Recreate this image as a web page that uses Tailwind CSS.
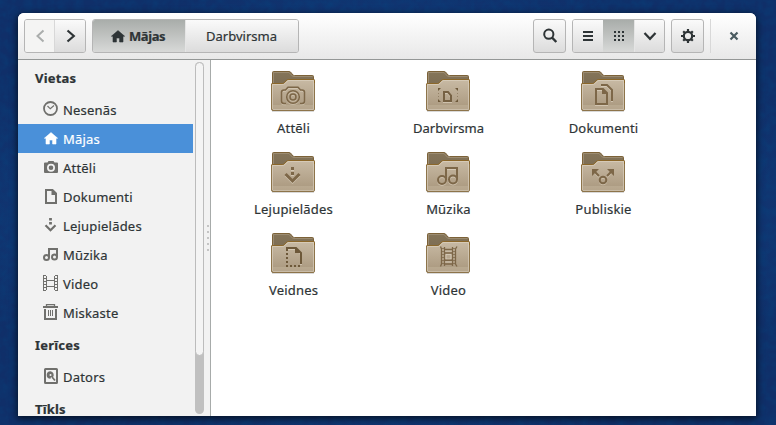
<!DOCTYPE html>
<html lang="lv">
<head>
<meta charset="utf-8">
<title>Mājas</title>
<script src="https://cdn.jsdelivr.net/npm/@tailwindcss/browser@4"></script>
</head>
<body class="relative h-[425px] w-[776px] overflow-hidden bg-[#103470] bg-[radial-gradient(ellipse_at_50%_50%,#12458b_0%,#134488_35%,#102f69_80%)] font-['Noto_Sans','Open_Sans',sans-serif] text-[13px] text-[#2e3436] [-webkit-text-stroke:0.2px_currentColor]">

<!-- wallpaper grain -->
<svg class="absolute inset-0 opacity-25" width="776" height="425">
  <filter id="grain"><feTurbulence type="fractalNoise" baseFrequency="0.12" numOctaves="3" seed="4"/><feColorMatrix values="0 0 0 0 0  0 0 0 0 0.08  0 0 0 0 0.25  1.8 0 0 0 -0.55"/></filter>
  <rect width="776" height="425" filter="url(#grain)"/>
</svg>

<!-- shared symbols -->
<svg width="0" height="0" class="absolute">
  <defs>
    <linearGradient id="front" x1="0" y1="0" x2="0" y2="1"><stop offset="0" stop-color="#c8baa4"/><stop offset="1" stop-color="#a8967c"/></linearGradient>
    <linearGradient id="back" x1="0" y1="0" x2="0" y2="1"><stop offset="0" stop-color="#857559"/><stop offset="1" stop-color="#7d6d53"/></linearGradient>
    <linearGradient id="shade" x1="0" y1="0" x2="0" y2="1"><stop offset="0" stop-color="#000" stop-opacity=".4"/><stop offset="1" stop-color="#000" stop-opacity="0"/></linearGradient>
    <symbol id="folder" viewBox="0 0 44 42">
      <rect x="1" y="39" width="42" height="2.4" rx="1" fill="url(#shade)"/>
      <path d="M1.500 14V1.500Q1.500.5 2.500.5H18Q19 .5 19.500 1L22 4Q22.500 4.500 23.500 4.500H41.500Q42.500 4.500 42.500 5.500V14Z" fill="url(#back)" stroke="#7c6238"/>
      <path d="M2.500 12V1.500H18L21.500 5.200Q22 5.500 23 5.500H41.500" fill="none" stroke="#a5967c" stroke-opacity=".7"/>
      <path d="M.5 38V13.5Q.5 12.5 1.5 12.5H11.5Q12.5 12.5 13.3 11.7L15.5 9.3Q16.2 8.5 17.3 8.5H42.5Q43.5 8.5 43.5 9.5V38Q43.5 39.5 42 39.5H2Q.5 39.5 .5 38Z" fill="url(#front)" stroke="#8d744a"/>
      <path d="M.5 14V13.5Q.5 12.5 1.5 12.5H11.5Q12.5 12.5 13.3 11.7L15.5 9.3Q16.2 8.5 17.3 8.5H42.5Q43.5 8.5 43.5 9.5V12" fill="none" stroke="#8b672a"/>
      <path d="M1.5 38V13.5H12Q13 13.5 13.8 12.7L16.2 10.2Q17 9.5 18 9.5H42.5V38.5H2" fill="none" stroke="#e0d6c5" stroke-opacity=".6"/>
      <path d="M2 34H42V38H2Z" fill="#d4c7b1" opacity=".3"/>
    </symbol>
    <symbol id="home" viewBox="0 0 16 16"><path d="M8 2.600 14.600 8.200H13V14H9.600V10H6.400V14H3V8.200H1.400Z" fill="currentColor" stroke="currentColor" stroke-width=".6" stroke-linejoin="round"/></symbol>
  </defs>
</svg>

<div class="relative ml-[18px] mt-[13px] flex h-[403px] w-[738px] flex-col overflow-hidden rounded-t-[6px] bg-white shadow-[0_2px_7px_1px_rgba(0,0,0,0.65)]">

  <header class="flex h-[47px] shrink-0 items-start border-b border-[#949796] bg-linear-to-b from-white to-[#e8e8e8] px-[6px] pt-[6px]">
    <div class="flex h-[34px] w-[62px] overflow-hidden rounded-[3px] border border-[#b5b5b5]">
      <div class="flex w-[30px] items-center justify-center border-r border-[#d8d8d8] bg-[#f4f4f3] text-[#aaadac]"><svg width="16" height="16" fill="none" stroke="currentColor" stroke-width="2"><path d="M11.500 2.500 5.500 8 11.500 13.500"/></svg></div>
      <div class="flex flex-1 items-center justify-center bg-linear-to-b from-[#fafafa] to-[#dcdcdc]"><svg width="16" height="16" fill="none" stroke="currentColor" stroke-width="2.200"><path d="M5.500 2.500 11.800 8 5.500 13.500"/></svg></div>
    </div>
    <div class="ml-[6px] flex h-[34px] w-[207px] overflow-hidden rounded-[3px] border border-[#b5b5b5]">
      <div class="flex w-[93px] items-center border-r border-[#e5e5e5] bg-linear-to-b from-[#a9adaa] to-[#d8d9d8] pl-[17px] font-bold"><svg class="mr-[3px] h-[16px] w-[16px]"><use href="#home"/></svg><span class="pt-px tracking-[-0.4px]">Mājas</span></div>
      <div class="flex flex-1 items-center justify-center bg-linear-to-b from-[#fafafa] to-[#dcdcdc] pr-px pt-px">Darbvirsma</div>
    </div>
    <div class="ml-auto flex h-[34px] w-[33px] items-center justify-center rounded-[3px] border border-[#b5b5b5] bg-linear-to-b from-[#fafafa] to-[#dcdcdc]"><svg width="16" height="16" fill="none" stroke="currentColor" stroke-width="2"><circle cx="6.800" cy="6.200" r="4.600"/><path d="M10 9.500 14.300 14" stroke-width="2.500"/></svg></div>
    <div class="ml-[6px] flex h-[34px] w-[93px] overflow-hidden rounded-[3px] border border-[#b5b5b5]">
      <div class="flex w-[30px] items-center justify-center bg-linear-to-b from-[#fafafa] to-[#dcdcdc]"><svg width="16" height="16" fill="currentColor"><path d="M3 3h10v2H3zM3 7h10v2H3zM3 11h10v2H3z"/></svg></div>
      <div class="flex w-[31px] items-center justify-center bg-linear-to-b from-[#a9adaa] to-[#d8d9d8]"><svg width="16" height="16" fill="currentColor"><path d="M3 3h2v2H3zM7 3h2v2H7zM11 3h2v2h-2zM3 7h2v2H3zM7 7h2v2H7zM11 7h2v2h-2zM3 11h2v2H3zM7 11h2v2H7zM11 11h2v2h-2z"/></svg></div>
      <div class="flex flex-1 items-center justify-center border-l border-[#e5e5e5] bg-linear-to-b from-[#fafafa] to-[#dcdcdc]"><svg width="16" height="16" fill="none" stroke="currentColor" stroke-width="2.200"><path d="M2.500 5 8 10.800 13.500 5"/></svg></div>
    </div>
    <div class="ml-[6px] flex h-[34px] w-[33px] items-center justify-center rounded-[3px] border border-[#b5b5b5] bg-linear-to-b from-[#fafafa] to-[#dcdcdc]"><svg width="16" height="16" fill="none" stroke="currentColor"><circle cx="8" cy="8" r="4.200" stroke-width="2.200"/><path d="M8 1V4M8 12V15M1 8H4M12 8H15M3.200 3.200 5 5M11 11 12.800 12.800M12.800 3.200 11 5M5 11 3.200 12.800" stroke-width="2.200"/></svg></div>
    <div class="ml-[6px] h-[34px] w-px bg-[#d8d8d8]"></div>
    <div class="ml-[15px] mr-[8px] flex h-[34px] w-[16px] items-center justify-center text-[#4a5b60]"><svg width="16" height="16" fill="none" stroke="currentColor" stroke-width="2.200"><path d="M4.500 4.500 11.500 11.500M11.500 4.500 4.500 11.500"/></svg></div>
  </header>

  <div class="flex min-h-0 flex-1">
    <aside class="flex w-[193px] shrink-0 border-r border-[#a7abaa] bg-[#f2f2f2]">
      <nav class="w-[175px] overflow-hidden tracking-[0.2px] [&_svg]:-mt-px [&_svg]:mr-[4px] [&_svg]:shrink-0 [&_svg]:text-[#70706d]">
        <h2 class="flex h-[35px] items-center pl-[17px] pt-[3px] font-bold">Vietas</h2>
        <div class="flex h-[29px] items-center pl-[25px]"><svg width="16" height="16" fill="none" stroke="currentColor" stroke-width="1.800"><circle cx="7.500" cy="7.500" r="6.500"/><path d="M4.500 5 7.300 7.800 11 4.500" stroke-width="1.200"/></svg><span class="pt-[3px]">Nesenās</span></div>
        <div class="flex h-[29px] items-center bg-[#4a90d9] pl-[25px] text-white [&_svg]:text-white!"><svg class="h-[16px] w-[16px]"><use href="#home"/></svg><span class="pt-[3px]">Mājas</span></div>
        <div class="flex h-[29px] items-center pl-[25px]"><svg width="16" height="16"><path fill="currentColor" fill-rule="evenodd" d="M2 3.500H4.500L5.500 2H10.500L11.500 3.500H14Q15 3.500 15 4.500V13Q15 14 14 14H2Q1 14 1 13V4.500Q1 3.500 2 3.500ZM8 4.800A4 4 0 1 0 8 12.800 4 4 0 1 0 8 4.800ZM8 6.500A2.300 2.300 0 1 1 8 11.100 2.300 2.300 0 1 1 8 6.500Z"/></svg><span class="pt-[3px]">Attēli</span></div>
        <div class="flex h-[29px] items-center pl-[25px]"><svg width="16" height="16" fill="none" stroke="currentColor" stroke-width="2"><path d="M3 2H9.500L13 5.500V15H3Z"/><path d="M8.500 2V7H13V5L10 2Z" fill="currentColor" stroke="none"/></svg><span class="pt-[3px]">Dokumenti</span></div>
        <div class="flex h-[29px] items-center pl-[25px]"><svg width="16" height="16" fill="none" stroke="currentColor" stroke-width="2.200"><path d="M2.500 8.300 7.500 13.300 12.500 8.300"/><path d="M7.500 1V3.500M7.500 5V7.500" stroke-width="2.800"/></svg><span class="pt-[3px]">Lejupielādes</span></div>
        <div class="flex h-[29px] items-center pl-[25px]"><svg width="16" height="16" fill="none" stroke="currentColor" stroke-width="2"><circle cx="3.500" cy="11.500" r="2.500"/><circle cx="11.500" cy="11" r="2.500"/><path d="M6 11.500V3H14V11"/></svg><span class="pt-[3px]">Mūzika</span></div>
        <div class="flex h-[29px] items-center pl-[25px]"><svg width="16" height="16" fill="none" stroke="currentColor"><path d="M.5 0V16M3.500 1V15M11.500 1V15M14.500 0V16" stroke-width="1"/><path d="M2 0V16M13 0V16" stroke-width="2" stroke-dasharray="1 2"/><path d="M4 5.500H11M4 11.500H11" stroke-width="1.200"/></svg><span class="pt-[3px]">Video</span></div>
        <div class="flex h-[29px] items-center pl-[25px]"><svg width="16" height="16" fill="none" stroke="currentColor"><path d="M0 3H15" stroke-width="2"/><path d="M3.500 2.500V.7H11.500V2.500" stroke-width="1.300"/><path d="M2 5V15H13V5" stroke-width="2"/><path d="M5.500 6V12M7.500 6V12M9.500 6V12"/></svg><span class="pt-[3px]">Miskaste</span></div>
        <h2 class="flex h-[35px] items-center pl-[17px] pt-[3px] font-bold">Ierīces</h2>
        <div class="flex h-[29px] items-center pl-[25px]"><svg width="16" height="16" fill="none" stroke="currentColor"><rect x="2" y="1" width="12" height="14" rx=".5" stroke-width="2"/><path d="M7.500 3.200A3.800 3.800 0 1 0 7.500 10.800L8 9 10 9.200A3.800 3.800 0 0 0 7.500 3.200Z" fill="currentColor" stroke="none"/><circle cx="7.500" cy="7" r="1" fill="#f2f2f2" stroke="none"/><path d="M9 9 12 12.500" stroke-width="1.800"/></svg><span class="pt-[3px]">Dators</span></div>
        <h2 class="flex h-[35px] items-center pl-[17px] pt-[3px] font-bold">Tīkls</h2>
      </nav>
      <div class="ml-[2px] mt-[2px] h-[352px] w-[9px] rounded-full bg-[#c0c0c0]"><div class="h-[294px] rounded-full border border-[#bcbcbc] bg-[#f4f4f4]"></div></div>
      <div class="ml-[3px] flex w-[2px] flex-col justify-center gap-[4px]"><i class="h-[2px] bg-[#c4c4c4]"></i><i class="h-[2px] bg-[#c4c4c4]"></i><i class="h-[2px] bg-[#c4c4c4]"></i><i class="h-[2px] bg-[#c4c4c4]"></i><i class="h-[2px] bg-[#c4c4c4]"></i></div>
    </aside>

    <main class="grid flex-1 auto-rows-[81px] grid-cols-[155px_155px_155px] pl-[5px] pt-[11px] text-center tracking-[0.2px] [&_svg]:ml-[55px]">
      <figure><svg width="44" height="42"><use href="#folder"/><g fill="none" stroke="#e3d9c8" stroke-opacity=".5" stroke-width="1.500" transform="translate(0 1)"><path d="M15 32.500H13Q10.500 32.500 10.500 30V21.500Q10.500 19 13 19H14.500L17 16.300H27L29.500 19H31Q33.500 19 33.500 21.500V30Q33.500 32.500 31 32.500H29"/><circle cx="22" cy="26" r="6.300"/><circle cx="22" cy="26" r="3"/></g><g fill="none" stroke="#7d6748" stroke-width="1.600"><path d="M15 32.500H13Q10.500 32.500 10.500 30V21.500Q10.500 19 13 19H14.500L17 16.300H27L29.500 19H31Q33.500 19 33.500 21.500V30Q33.500 32.500 31 32.500H29"/><circle cx="22" cy="26" r="6.300"/><circle cx="22" cy="26" r="3"/></g></svg><figcaption class="mt-[6px] leading-[18px]">Attēli</figcaption></figure>

      <figure><svg width="44" height="42"><use href="#folder"/><path d="M18 21H22L25 24.500V30H18Z" fill="none" stroke="#e3d9c8" stroke-opacity=".6" stroke-width="2" transform="translate(0 1)"/><path d="M18 21H22L25 24.500V30H18Z" fill="none" stroke="#766143" stroke-width="2"/><path d="M12 20V17H15ZM29 17H32V20ZM12 28V31H15ZM32 28V31H29Z" fill="#6d5839"/><path d="M12.500 22V23M12.500 25V26M31.500 22V23M31.500 25V26" stroke="#6d5839" stroke-opacity=".5"/></svg><figcaption class="mt-[6px] leading-[18px] tracking-normal">Darbvirsma</figcaption></figure>

      <figure><svg width="44" height="42"><use href="#folder"/><g fill="none" stroke-width="2"><path d="M15 18H22L26 22V33H15ZM20 14H26L31 19V30" stroke="#e3d9c8" stroke-opacity=".6" transform="translate(0 1)"/><path d="M15 18H22L26 22V33H15ZM20 14H26L31 19V30" stroke="#7d6748"/><path d="M21 18V23H26V22L22 18Z" fill="#7d6748"/></g></svg><figcaption class="mt-[6px] leading-[18px]">Dokumenti</figcaption></figure>

      <figure><svg width="44" height="42"><use href="#folder"/><g fill="none" stroke-width="3"><path d="M14.500 22 21.500 29 28.500 22M21.500 15V18M21.500 20V23" stroke="#e3d9c8" stroke-opacity=".6" transform="translate(0 1)"/><path d="M14.500 22 21.500 29 28.500 22M21.500 15V18M21.500 20V23" stroke="#7d6748"/></g></svg><figcaption class="mt-[6px] leading-[18px]">Lejupielādes</figcaption></figure>

      <figure><svg width="44" height="42"><use href="#folder"/><g fill="none" stroke="#e3d9c8" stroke-opacity=".6" stroke-width="2" transform="translate(0 1)"><circle cx="16" cy="28" r="4"/><circle cx="27" cy="27.500" r="4"/><path d="M20 28V16H31V27.500"/></g><g fill="none" stroke="#7d6748" stroke-width="2"><circle cx="16" cy="28" r="4"/><circle cx="27" cy="27.500" r="4"/><path d="M20 28V16H31V27.500"/></g></svg><figcaption class="mt-[6px] leading-[18px]">Mūzika</figcaption></figure>

      <figure><svg width="44" height="42"><use href="#folder"/><g fill="none" stroke="#e3d9c8" stroke-opacity=".5" stroke-width="2" transform="translate(0 1)"><circle cx="22" cy="28" r="3.300"/><path d="M18 24 12.500 18.500M26 24 31.500 18.500"/></g><g fill="none" stroke="#7d6748" stroke-width="2"><circle cx="22" cy="28" r="3.300"/><path d="M18 24 12.500 18.500M26 24 31.500 18.500"/><path d="M11 17H18L11 24ZM33 17H26L33 24Z" fill="#7d6748" stroke="none"/></g></svg><figcaption class="mt-[6px] leading-[18px]">Publiskie</figcaption></figure>

      <figure><svg width="44" height="42"><use href="#folder"/><g fill="none" stroke-width="2"><path d="M15 15H25L30 20V31" stroke="#e3d9c8" stroke-opacity=".6" transform="translate(0 1)"/><path d="M15 15H25L30 20V31" stroke="#6d5839"/><path d="M24 15V20H30L25 15Z" fill="#6d5839" stroke="none"/><path d="M16 16V33" stroke="#6d5839" stroke-dasharray="2 2"/><path d="M15 33H31" stroke="#6d5839" stroke-dasharray="2 2"/></g></svg><figcaption class="mt-[6px] leading-[18px]">Veidnes</figcaption></figure>

      <figure><svg width="44" height="42"><use href="#folder"/><g fill="none"><path d="M14.500 13.500 15.500 16V31L14.500 33.500M18.500 14V33M26.500 14V33M31 13.500 29.500 16V31L31 33.500" stroke="#7d6748" stroke-width="1.300"/><path d="M17 15V33M28 15V33" stroke="#7d6748" stroke-width="1.500" stroke-dasharray="1 2"/><path d="M19 18H26M19 29H26M20 21.500H25V26H20Z" stroke="#e3d9c8" stroke-opacity=".6"/><path d="M19 16.500H26M19 20H26M19 27.200H26M19 31H26" stroke="#7d6748" stroke-width="1.500"/></g></svg><figcaption class="mt-[6px] leading-[18px]">Video</figcaption></figure>
    </main>
  </div>
</div>
</body>
</html>
